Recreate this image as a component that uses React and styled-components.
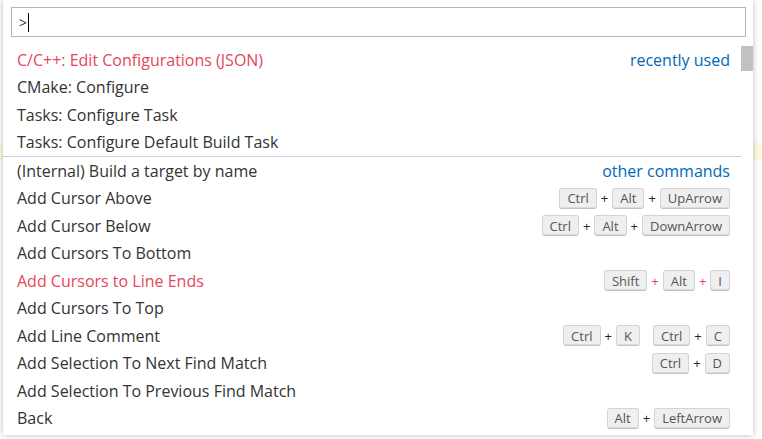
import React from "react"
import styled, { createGlobalStyle } from "styled-components"

const GlobalStyle = createGlobalStyle`
  html, body {
    margin: 0;
    padding: 0;
    background: #ffffff;
  }
  body {
    font-family: "Open Sans", "Noto Sans", sans-serif;
    overflow: hidden;
  }
`

const Editor = styled.div`
  position: relative;
  width: 762px;
  height: 439px;
  background: #ffffff;
  padding-top: 143px;
  box-sizing: border-box;
`

const CurrentLine = styled.div`
  height: 17px;
  background: #fffbe0;
`

const QuickPick = styled.div`
  position: absolute;
  top: 0;
  left: 3px;
  width: 750px;
  background: #ffffff;
  box-shadow: 0 0 6px rgba(0, 0, 0, 0.28);
  padding-bottom: 3px;
`

const InputWrap = styled.div`
  padding: 7px 7px 9px 8px;
`

const Input = styled.div`
  height: 28px;
  border: 1px solid #b5b5b5;
  display: flex;
  align-items: center;
  padding-left: 7px;
  font-size: 14px;
  color: #333;
`

const Caret = styled.span`
  display: inline-block;
  width: 1px;
  height: 19px;
  background: #000;
  margin-left: 1px;
`

const ListArea = styled.div`
  position: relative;
  padding-right: 12px;
`

const Scrollbar = styled.div`
  position: absolute;
  top: 0;
  right: 0;
  width: 12px;
  height: 25px;
  background: #c1c1c1;
`

const Row = styled.div`
  height: 27.5px;
  display: flex;
  align-items: center;
  justify-content: space-between;
  padding: 0 11px 0 14px;
  font-size: 16px;
  color: ${p => (p.$hl ? "#e5465a" : "#333333")};
  border-top: ${p => (p.$sep ? "1px solid #cfcfe0" : "none")};
  box-sizing: content-box;
`

const Label = styled.span`
  white-space: nowrap;
`

const Group = styled.span`
  color: #0068b8;
  white-space: nowrap;
`

const Keys = styled.span`
  display: flex;
  align-items: center;
  gap: 13px;
`

const Chord = styled.span`
  display: flex;
  align-items: center;
`

const Key = styled.span`
  display: inline-flex;
  align-items: center;
  height: 19px;
  padding: 0 7px;
  font-size: 13px;
  color: #555;
  background: #efefef;
  border: 1px solid #d4d4d4;
  border-bottom-color: #c2c2c2;
  border-radius: 3px;
  box-shadow: inset 0 -1px 0 #dcdcdc;
`

const Plus = styled.span`
  font-size: 13px;
  margin: 0 4px;
  color: ${p => (p.$hl ? "#e5465a" : "#222")};
`

const items = [
  { label: "C/C++: Edit Configurations (JSON)", hl: true, group: "recently used" },
  { label: "CMake: Configure" },
  { label: "Tasks: Configure Task" },
  { label: "Tasks: Configure Default Build Task" },
  { label: "(Internal) Build a target by name", sep: true, group: "other commands" },
  { label: "Add Cursor Above", keys: [["Ctrl", "Alt", "UpArrow"]] },
  { label: "Add Cursor Below", keys: [["Ctrl", "Alt", "DownArrow"]] },
  { label: "Add Cursors To Bottom" },
  { label: "Add Cursors to Line Ends", hl: true, keys: [["Shift", "Alt", "I"]] },
  { label: "Add Cursors To Top" },
  { label: "Add Line Comment", keys: [["Ctrl", "K"], ["Ctrl", "C"]] },
  { label: "Add Selection To Next Find Match", keys: [["Ctrl", "D"]] },
  { label: "Add Selection To Previous Find Match" },
  { label: "Back", keys: [["Alt", "LeftArrow"]] },
]

const Shortcut = ({ chords, hl }) => (
  <Keys>
    {chords.map((chord, i) => (
      <Chord key={i}>
        {chord.map((k, j) => (
          <React.Fragment key={j}>
            {j > 0 && <Plus $hl={hl}>+</Plus>}
            <Key>{k}</Key>
          </React.Fragment>
        ))}
      </Chord>
    ))}
  </Keys>
)

export default function App() {
  return (
    <>
      <GlobalStyle />
      <Editor>
        <CurrentLine />
        <QuickPick>
          <InputWrap>
            <Input>
              &gt;<Caret />
            </Input>
          </InputWrap>
          <ListArea>
            <Scrollbar />
            {items.map((it, i) => (
              <Row key={i} $hl={it.hl} $sep={it.sep}>
                <Label>{it.label}</Label>
                {it.group && <Group>{it.group}</Group>}
                {it.keys && <Shortcut chords={it.keys} hl={it.hl} />}
              </Row>
            ))}
          </ListArea>
        </QuickPick>
      </Editor>
    </>
  )
}
